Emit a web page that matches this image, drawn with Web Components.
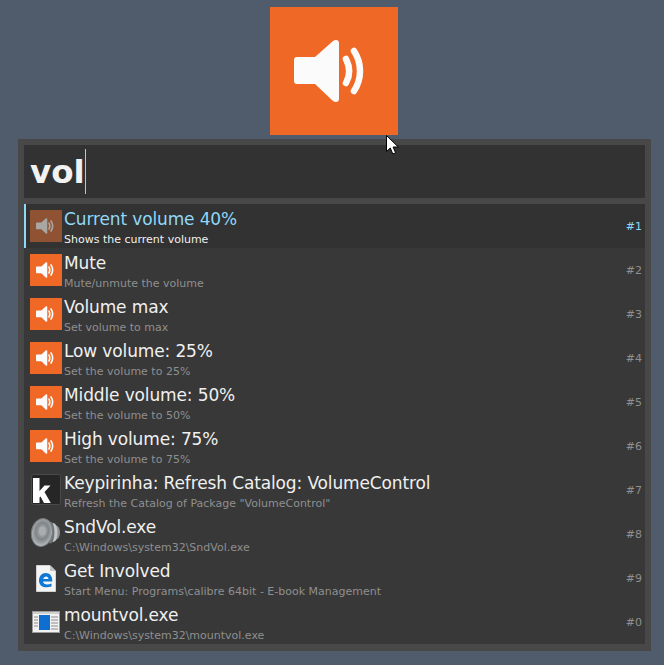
<!DOCTYPE html>
<html>
<head>
<meta charset="utf-8">
<title>Keypirinha</title>
<style>
    html, body { margin: 0; height: 100%; background: #505c6c; overflow: hidden; }
    body { font-family: "DejaVu Sans", sans-serif; }
</style>
</head>
<body>
<launcher-page>
    <speaker-tile slot="tile" size="128"></speaker-tile>
    <launcher-box slot="box" query="vol">
        <result-row title="Current volume 40%" desc="Shows the current volume" index="#1" selected><speaker-tile size="32" dim></speaker-tile></result-row>
        <result-row title="Mute" desc="Mute/unmute the volume" index="#2"><speaker-tile size="32"></speaker-tile></result-row>
        <result-row title="Volume max" desc="Set volume to max" index="#3"><speaker-tile size="32"></speaker-tile></result-row>
        <result-row title="Low volume: 25%" desc="Set the volume to 25%" index="#4"><speaker-tile size="32"></speaker-tile></result-row>
        <result-row title="Middle volume: 50%" desc="Set the volume to 50%" index="#5"><speaker-tile size="32"></speaker-tile></result-row>
        <result-row title="High volume: 75%" desc="Set the volume to 75%" index="#6"><speaker-tile size="32"></speaker-tile></result-row>
        <result-row title="Keypirinha: Refresh Catalog: VolumeControl" desc='Refresh the Catalog of Package "VolumeControl"' index="#7"><app-icon kind="keypirinha"></app-icon></result-row>
        <result-row title="SndVol.exe" desc="C:\Windows\system32\SndVol.exe" index="#8"><app-icon kind="sndvol"></app-icon></result-row>
        <result-row title="Get Involved" desc="Start Menu: Programs\calibre 64bit - E-book Management" index="#9"><app-icon kind="edge"></app-icon></result-row>
        <result-row title="mountvol.exe" desc="C:\Windows\system32\mountvol.exe" index="#0"><app-icon kind="exe"></app-icon></result-row>
    </launcher-box>
</launcher-page>

<script>
class LauncherPage extends HTMLElement {
    constructor() {
        super();
        this.attachShadow({ mode: 'open' });
        this.shadowRoot.innerHTML = `
            <style>
                :host { display: block; position: relative; height: 665px; }
                .tile { display: flex; justify-content: center; padding: 7px 0 4px 4px; }
                .box { padding-left: 18px; width: 633px; }
                .cursor { position: absolute; left: 386px; top: 135px; width: 13px; height: 20px; }
            </style>
            <div class="tile"><slot name="tile"></slot></div>
            <div class="box"><slot name="box"></slot></div>
            <svg class="cursor" viewBox="0 0 13 20">
                <path d="M.5.5V16.5L4.3 13 6.8 19 9.6 17.8 7.1 12H12.3Z" fill="#fff" stroke="#000"/>
            </svg>
        `;
    }
}

class SpeakerTile extends HTMLElement {
    constructor() {
        super();
        this.attachShadow({ mode: 'open' });
    }

    connectedCallback() {
        const size = this.getAttribute('size') || 32;
        const dim = this.hasAttribute('dim');
        const ink = dim ? '#a9a6a3' : '#fbfbfb';
        this.shadowRoot.innerHTML = `
            <style>
                :host { display: block; width: ${size}px; height: ${size}px; }
                svg { display: block; }
            </style>
            <svg width="${size}" height="${size}" viewBox="0 0 128 128">
                <rect width="128" height="128" fill="${dim ? '#8f5232' : '#f06825'}"/>
                <path d="M27 50H45L63 34C66 32 69 33 69 36V92C69 95 66 96 63 94L45 77H27C25 77 24 76 24 74V53C24 51 25 50 27 50Z" fill="${ink}"/>
                <g fill="none" stroke="${ink}" stroke-width="6.500" stroke-linecap="round">
                    <path d="M76 52C80 60 80 69 76 76"/>
                    <path d="M84 44C92 56 92 72 84 84"/>
                </g>
            </svg>
        `;
    }
}

class AppIcon extends HTMLElement {
    constructor() {
        super();
        this.attachShadow({ mode: 'open' });
    }

    connectedCallback() {
        const icons = {
            keypirinha: `
                <rect x="1.500" y=".5" width="29" height="30" rx="2" fill="#262626" stroke="#4a4a4a"/>
                <path d="M3 4H9.500V17L14.500 11.500H20.500L14.500 18 20.800 29H14L10.500 22.500 9.500 23.500V29H3Z" fill="#fff"/>`,
            sndvol: `
                <defs>
                    <radialGradient id="cone" cx=".5" cy=".45" r=".6">
                        <stop offset="0" stop-color="#b9bdbf"/>
                        <stop offset=".5" stop-color="#7f8589"/>
                        <stop offset=".8" stop-color="#a8adb0"/>
                        <stop offset="1" stop-color="#e2e4e5"/>
                    </radialGradient>
                </defs>
                <ellipse cx="26" cy="14.500" rx="4" ry="7" fill="#8b8f92"/>
                <ellipse cx="23.500" cy="14.500" rx="4" ry="9.500" fill="#c3c6c8"/>
                <ellipse cx="20.500" cy="14.500" rx="4" ry="11" fill="#6f7477"/>
                <ellipse cx="12" cy="14.500" rx="10.500" ry="14" fill="url(#cone)" stroke="#777b7e" transform="rotate(10 12 14.500)"/>
                <ellipse cx="12.500" cy="13" rx="3.500" ry="4.500" fill="#a9adaf"/>`,
            edge: `
                <path d="M6.500 3.500H20L25.500 9V29.500H6.500Z" fill="#f4f4f4" stroke="#d2d2d2"/>
                <path d="M20 3.500V9H25.500Z" fill="#c4c4c4"/>
                <path d="M9 18.500C9 14 12 11 15.500 11 20 11 22.500 14 22.300 19.500H13C13.300 22.500 17.500 23.500 21.500 21.500V24.500C15.500 26.500 9 25 9 18.500ZM13.200 17H18.500C18.500 13.500 14 13.500 13.200 17Z" fill="#0f78d4"/>`,
            exe: `
                <rect x="2.500" y="5.500" width="27" height="21" fill="#f2f2f2" stroke="#9a9a9a"/>
                <rect x="3" y="6" width="26" height="2" fill="#d0d0d0"/>
                <rect x="9" y="9" width="11" height="15" fill="#0f6fd0"/>
                <path d="M4 11H8M4 14H8M4 17H8M4 20H8M21 11H28M21 14H28M21 17H28M21 20H28M21 23H28" stroke="#8a8a8a"/>`
        };
        this.shadowRoot.innerHTML = `
            <style>
                :host { display: block; width: 32px; height: 32px; }
                svg { display: block; }
            </style>
            <svg width="32" height="32" viewBox="0 0 32 32">${icons[this.getAttribute('kind')]}</svg>
        `;
    }
}

class LauncherBox extends HTMLElement {
    constructor() {
        super();
        this.attachShadow({ mode: 'open' });
    }

    connectedCallback() {
        this.shadowRoot.innerHTML = `
            <style>
                :host { display: block; background: #484848; padding: 6px 6px 7px; }
                .edit {
                    height: 53px;
                    background: #323232;
                    color: #f2f2f2;
                    font: bold 32.500px "DejaVu Sans", sans-serif;
                    display: flex;
                    align-items: center;
                    padding-left: 6px;
                    box-sizing: border-box;
                }
                .caret { width: 1px; height: 45px; background: #c4c4c4; }
                .list { margin-top: 6px; background: #383838; }
            </style>
            <div class="edit"><span>${this.getAttribute('query')}</span><span class="caret"></span></div>
            <div class="list"><slot></slot></div>
        `;
    }
}

class ResultRow extends HTMLElement {
    constructor() {
        super();
        this.attachShadow({ mode: 'open' });
    }

    connectedCallback() {
        this.shadowRoot.innerHTML = `
            <style>
                :host {
                    display: grid;
                    grid-template-columns: 32px 1fr auto;
                    column-gap: 2px;
                    align-items: center;
                    height: 44px;
                    box-sizing: border-box;
                    padding: 0 3px 0 6px;
                    color: #f0f0f0;
                }
                :host([selected]) { background: #323232; box-shadow: inset 2px 0 #8fd8f8; }
                .text { min-width: 0; white-space: nowrap; padding-top: 3px; }
                .title { font-size: 17px; letter-spacing: -0.13px; line-height: 22px; }
                .desc { font-size: 11px; line-height: 14px; color: #8f8f8f; margin-top: 3px; }
                .index { font-size: 11px; color: #8f8f8f; }
                :host([selected]) .title, :host([selected]) .index { color: #8fd8f8; }
                :host([selected]) .desc { color: #f0f0f0; }
            </style>
            <slot></slot>
            <div class="text">
                <div class="title">${this.getAttribute('title')}</div>
                <div class="desc">${this.getAttribute('desc')}</div>
            </div>
            <div class="index">${this.getAttribute('index')}</div>
        `;
    }
}

customElements.define('launcher-page', LauncherPage);
customElements.define('speaker-tile', SpeakerTile);
customElements.define('app-icon', AppIcon);
customElements.define('launcher-box', LauncherBox);
customElements.define('result-row', ResultRow);
</script>
</body>
</html>
